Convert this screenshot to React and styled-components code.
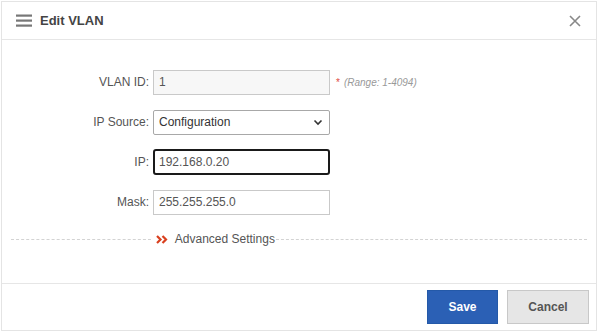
import React from 'react';
import styled, { createGlobalStyle } from 'styled-components';

const GlobalStyle = createGlobalStyle`
  html, body { margin: 0; padding: 0; background: #fff; }
  body { font-family: "Liberation Sans", Arial, sans-serif; color: #333; }
`;

const Dialog = styled.div`
  width: 596px;
  height: 330px;
  margin: 1px 0 0 1px;
  border: 1px solid #e4e4e4;
  display: flex;
  flex-direction: column;
  box-sizing: border-box;
`;

const Header = styled.div`
  height: 37px;
  border-bottom: 1px solid #e6e6e6;
  display: flex;
  align-items: center;
  padding: 0 14px 0 14px;
  flex-shrink: 0;
`;

const Title = styled.h1`
  margin: 0 0 0 8px;
  font-size: 13px;
  font-weight: bold;
  color: #444;
  flex: 1;
`;

const CloseBtn = styled.button`
  border: none;
  background: none;
  padding: 0;
  width: 14px;
  height: 14px;
  cursor: pointer;
  display: flex;
`;

const Body = styled.div`
  flex: 1;
  padding: 30px 9px 0 9px;
  display: flex;
  flex-direction: column;
`;

const Row = styled.div`
  display: flex;
  align-items: center;
  height: 24px;
  margin-bottom: ${p => p.gap || 16}px;
`;

const Label = styled.label`
  width: 138px;
  text-align: right;
  font-size: 12px;
  color: #555;
  padding-right: 4px;
`;

const Input = styled.input`
  box-sizing: border-box;
  width: 177px;
  height: ${p => (p.focused ? 26 : 25)}px;
  border: 1px solid ${p => (p.focused ? '#1a1a1a' : '#c9c9c9')};
  border-width: ${p => (p.focused ? 2 : 1)}px;
  border-radius: ${p => (p.focused ? 3 : 0)}px;
  padding: 0 ${p => (p.focused ? 4 : 5)}px;
  font-family: "Liberation Sans", Arial, sans-serif;
  font-size: 12px;
  color: #555;
  background: ${p => (p.disabled ? '#f7f7f7' : '#fff')};
  outline: none;
`;

const SelectBox = styled.div`
  box-sizing: border-box;
  width: 177px;
  height: 25px;
  border: 1px solid #a8a8a8;
  border-radius: 2px;
  display: flex;
  align-items: center;
  justify-content: space-between;
  padding: 0 6px 0 5px;
  font-size: 12px;
  color: #333;
`;

const Hint = styled.span`
  margin-left: 6px;
  font-size: 10px;
  font-style: italic;
  color: #999;
`;

const Star = styled.span`
  color: #e04b3f;
  font-style: normal;
  margin-right: 4px;
`;

const Divider = styled.div`
  display: flex;
  align-items: center;
  margin-top: 10px;
`;

const Dash = styled.div`
  flex: ${p => p.grow};
  border-top: 1px dashed #d3d3d3;
`;

const AdvLink = styled.a`
  display: flex;
  align-items: center;
  font-size: 12px;
  color: #555;
  padding: 0 1px 0 5px;
  cursor: pointer;
`;

const Arrows = styled.svg`
  margin-right: 7px;
`;

const Footer = styled.div`
  height: 46px;
  border-top: 1px solid #e6e6e6;
  display: flex;
  align-items: center;
  justify-content: flex-end;
  padding: 0 7px 0 0;
  gap: 9px;
  flex-shrink: 0;
`;

const Button = styled.button`
  height: 34px;
  border: 1px solid ${p => (p.primary ? '#2459a8' : '#c8c8c8')};
  background: ${p => (p.primary ? '#2b60b5' : '#e6e6e6')};
  color: ${p => (p.primary ? '#fff' : '#555')};
  font-family: "Liberation Sans", Arial, sans-serif;
  font-size: 12px;
  font-weight: bold;
  width: ${p => p.w}px;
  cursor: pointer;
`;

const Menu = () => (
  <svg width="16" height="13" viewBox="0 0 16 13">
    <rect x="0" y="0.5" width="16" height="2.2" fill="#777" />
    <rect x="0" y="5.5" width="16" height="2.2" fill="#777" />
    <rect x="0" y="10.5" width="16" height="2.2" fill="#777" />
  </svg>
);

const Close = () => (
  <svg width="14" height="14" viewBox="0 0 14 14">
    <path d="M2 2 L12 12 M12 2 L2 12" stroke="#888" strokeWidth="1.6" />
  </svg>
);

const Chevron = () => (
  <svg width="10" height="7" viewBox="0 0 10 7">
    <path d="M1.5 1.5 L5 5 L8.5 1.5" stroke="#333" strokeWidth="1.6" fill="none" />
  </svg>
);

const App = () => (
  <>
    <GlobalStyle />
    <Dialog>
      <Header>
        <Menu />
        <Title>Edit VLAN</Title>
        <CloseBtn><Close /></CloseBtn>
      </Header>
      <Body>
        <Row>
          <Label>VLAN ID:</Label>
          <Input disabled value="1" readOnly />
          <Hint><Star>*</Star>(Range: 1-4094)</Hint>
        </Row>
        <Row>
          <Label>IP Source:</Label>
          <SelectBox>Configuration<Chevron /></SelectBox>
        </Row>
        <Row>
          <Label>IP:</Label>
          <Input focused value="192.168.0.20" readOnly />
        </Row>
        <Row gap={8}>
          <Label>Mask:</Label>
          <Input value="255.255.255.0" readOnly />
        </Row>
        <Divider>
          <Dash grow={142} />
          <AdvLink>
            <Arrows width="12" height="9" viewBox="0 0 12 9">
              <path d="M1 1 L4.5 4.5 L1 8 M6.5 1 L10 4.5 L6.5 8" stroke="#d9401f" strokeWidth="2.2" fill="none" />
            </Arrows>
            Advanced Settings
          </AdvLink>
          <Dash grow={316} />
        </Divider>
      </Body>
      <Footer>
        <Button primary w={71}>Save</Button>
        <Button w={82}>Cancel</Button>
      </Footer>
    </Dialog>
  </>
);

export default App;
